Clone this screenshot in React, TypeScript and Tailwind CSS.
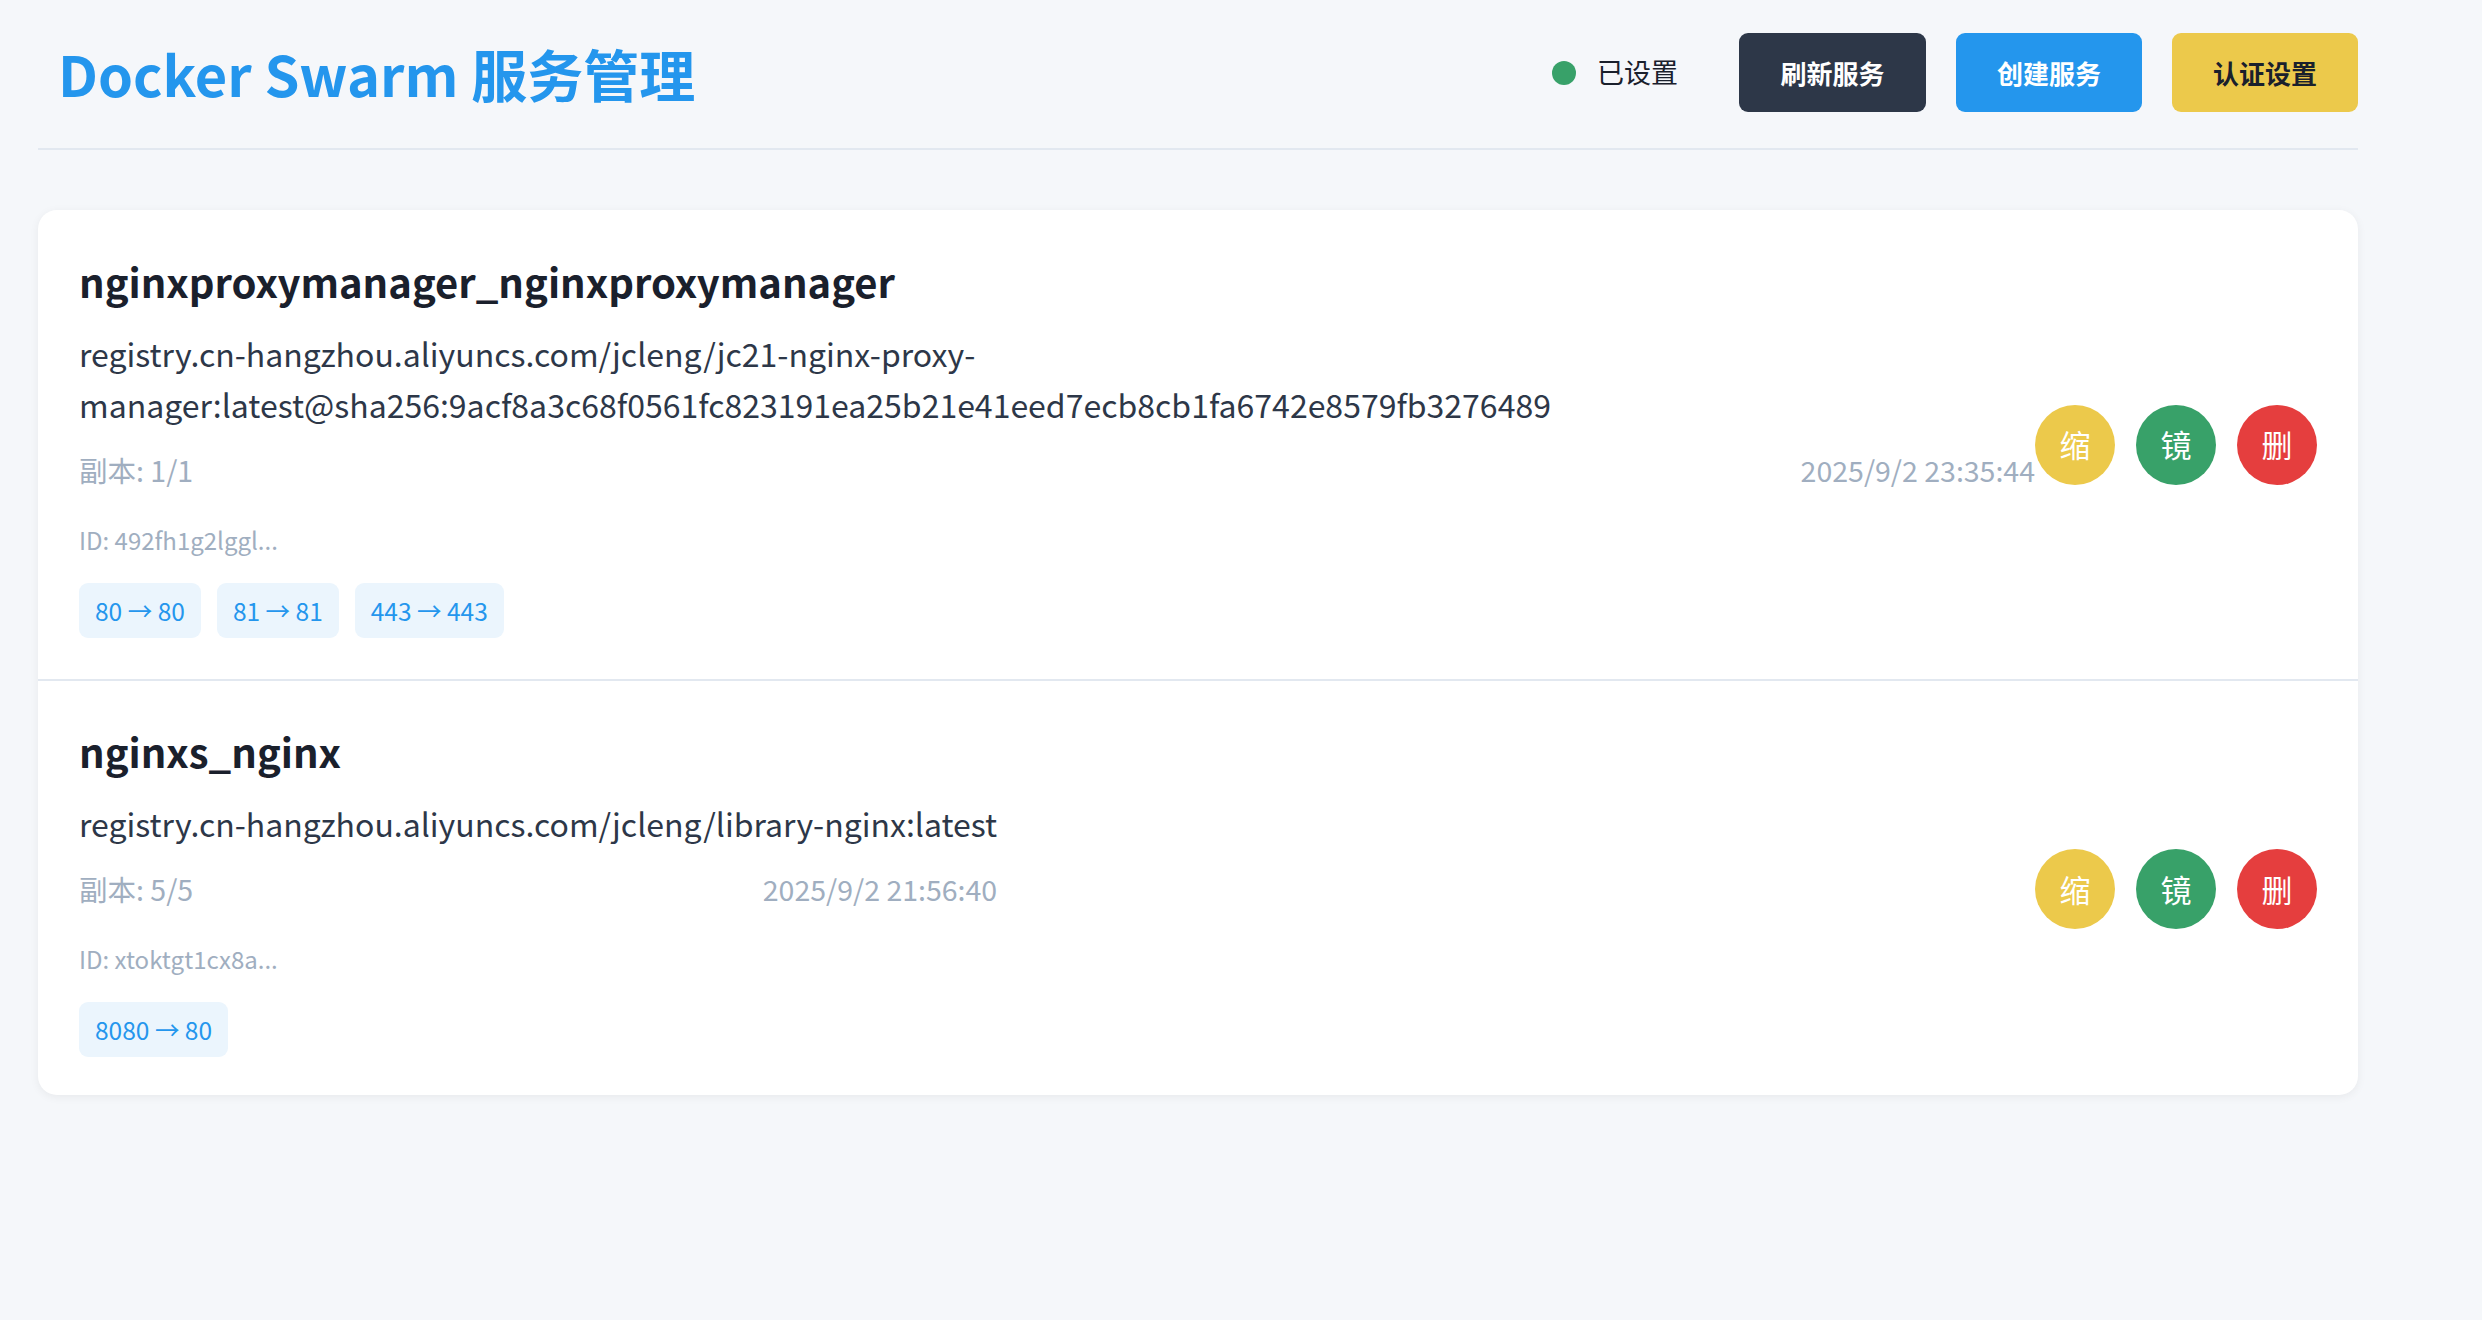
const services = [
  {
    id: "492fh1g2lggl...",
    name: "nginxproxymanager_nginxproxymanager",
    image:
      "registry.cn-hangzhou.aliyuncs.com/jcleng/jc21-nginx-proxy-manager:latest@sha256:9acf8a3c68f0561fc823191ea25b21e41eed7ecb8cb1fa6742e8579fb3276489",
    replicas: "1/1",
    time: "2025/9/2 23:35:44",
    ports: ["80 → 80", "81 → 81", "443 → 443"],
  },
  {
    id: "xtoktgt1cx8a...",
    name: "nginxs_nginx",
    image: "registry.cn-hangzhou.aliyuncs.com/jcleng/library-nginx:latest",
    replicas: "5/5",
    time: "2025/9/2 21:56:40",
    ports: ["8080 → 80"],
  },
]

function ServiceRow({ svc, last }: { svc: (typeof services)[number]; last: boolean }) {
  return (
    <div
      className={
        "flex items-center px-[41px] " +
        (last ? "pt-[40px] pb-[38px]" : "pt-[41px] pb-[41px] border-b-2 border-[#e2e8f0]")
      }
    >
      {/* info */}
      <div className="min-w-0">
        <h3 className="text-[40px] leading-[60px] font-bold text-[#1a202c]">{svc.name}</h3>
        <div className="mt-[17px] text-[32px] leading-[51px] text-[#2d3748] break-words">{svc.image}</div>
        <div className="mt-[18px] flex justify-between text-[28.5px] leading-[43px] text-[#a0aec0]">
          <span>副本: {svc.replicas}</span>
          <span>{svc.time}</span>
        </div>
        <div className="mt-[31px] text-[24px] leading-[35px] text-[#a0aec0]">ID: {svc.id}</div>
        <div className="mt-[26px] flex gap-[16px]">
          {svc.ports.map((p) => (
            <span
              key={p}
              className="rounded-[9px] bg-[#ebf5fd] px-[16px] py-[10px] text-[24.5px] leading-[35px] text-[#2496ed]"
            >
              {p}
            </span>
          ))}
        </div>
      </div>

      {/* actions */}
      <div className="ml-auto flex shrink-0 gap-[21px]">
        <button className="flex h-[80px] w-[80px] items-center justify-center rounded-full bg-[#ecc94b] text-[31px] text-white">
          缩
        </button>
        <button className="flex h-[80px] w-[80px] items-center justify-center rounded-full bg-[#38a169] text-[31px] text-white">
          镜
        </button>
        <button className="flex h-[80px] w-[80px] items-center justify-center rounded-full bg-[#e53e3e] text-[31px] text-white">
          删
        </button>
      </div>
    </div>
  )
}

export default function App() {
  return (
    <div
      className="min-h-screen bg-[#f5f7fa]"
      style={{ fontFamily: '"Noto Sans CJK SC", "Noto Sans", sans-serif' }}
    >
      <div className="ml-[38px] w-[2320px]">
        {/* Header */}
        <header className="flex items-center justify-between border-b-2 border-[#e2e8f0] pt-[33px] pb-[36px]">
          <h1 className="pl-[20px] text-[56px] leading-[57px] font-bold text-[#2496ed]">Docker Swarm 服务管理</h1>
          <div className="flex items-center">
            <span className="h-[24px] w-[24px] rounded-full bg-[#38a169]" />
            <span className="ml-[21px] text-[27px] text-[#1a202c]">已设置</span>
            <div className="ml-[61px] flex gap-[30px]">
              <button className="h-[79px] w-[187px] rounded-[9px] bg-[#2d3748] text-[26px] font-bold text-white">
                刷新服务
              </button>
              <button className="h-[79px] w-[186px] rounded-[9px] bg-[#2496ed] text-[26px] font-bold text-white">
                创建服务
              </button>
              <button className="h-[79px] w-[186px] rounded-[9px] bg-[#ecc94b] text-[26px] font-bold text-[#1a202c]">
                认证设置
              </button>
            </div>
          </div>
        </header>

        {/* Services */}
        <main className="mt-[60px] overflow-hidden rounded-[19px] bg-white shadow-[0_2px_10px_rgba(0,0,0,0.06)]">
          {services.map((svc, i) => (
            <ServiceRow key={svc.name} svc={svc} last={i === services.length - 1} />
          ))}
        </main>
      </div>
    </div>
  )
}
